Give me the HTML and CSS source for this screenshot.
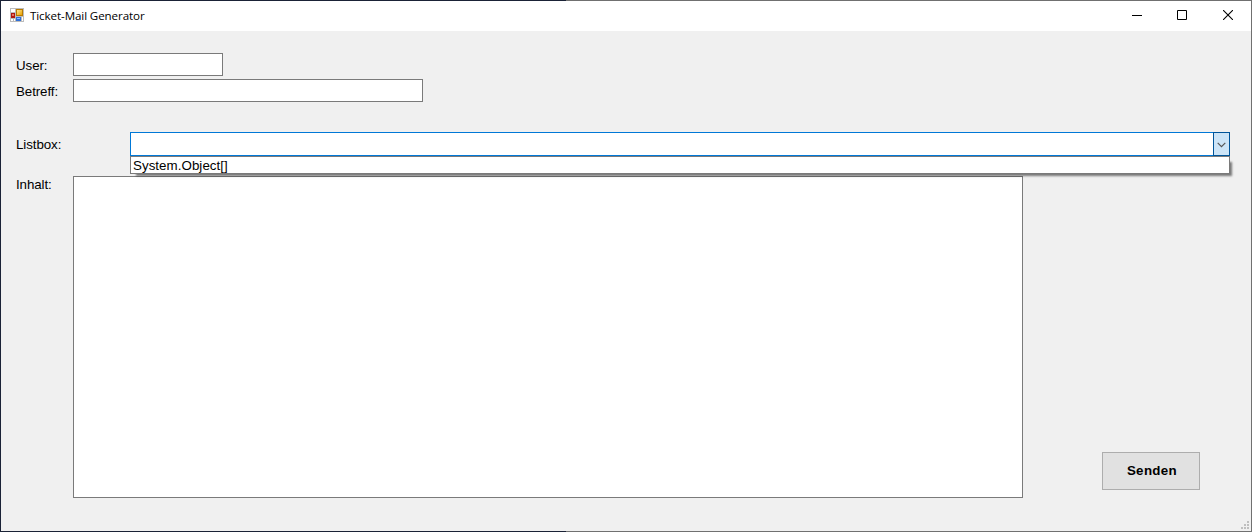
FILE: index.html
```html
<!DOCTYPE html>
<html lang="de">
<head>
  <meta charset="UTF-8">
  <title>Ticket-Mail Generator</title>
  <link rel="stylesheet" href="styles.css">
</head>
<body>

<div class="window">
  <div class="titlebar">
    <svg class="app-icon" width="14" height="14" viewBox="0 0 14 14" shape-rendering="crispEdges">
      <defs>
        <linearGradient id="gold" x1="0" y1="0" x2="1" y2="1">
          <stop offset="0" stop-color="#ffe790"/>
          <stop offset="1" stop-color="#e8a000"/>
        </linearGradient>
      </defs>
      <rect width="14" height="14" fill="#bcbcbc"/>
      <rect x="1" y="1" width="4" height="3" fill="#fff"/>
      <rect x="1" y="5" width="4" height="5" fill="#b01810"/>
      <rect x="2" y="6" width="2" height="2" fill="#e87060"/>
      <rect x="6" y="1" width="7" height="7" fill="#b87a00"/>
      <rect x="7" y="2" width="5" height="5" fill="url(#gold)"/>
      <rect x="6" y="9" width="5" height="4" fill="#2f6fd8"/>
      <rect x="7" y="10" width="3" height="1" fill="#8fbcff"/>
      <rect x="1" y="11" width="2" height="2" fill="#fff"/>
      <rect x="4" y="11" width="1" height="2" fill="#fff"/>
      <rect x="12" y="9" width="1" height="4" fill="#fff"/>
    </svg>
    <span class="title">Ticket-Mail Generator</span>
    <div class="controls">
      <svg width="10" height="10" viewBox="0 0 10 10" shape-rendering="crispEdges"><path d="M0 5h10v1H0z"/></svg>
      <svg width="10" height="10" viewBox="0 0 10 10"><path d="M.5.5h9v9h-9z" fill="none" stroke="#000"/></svg>
      <svg width="10" height="10" viewBox="0 0 10 10"><path d="M0 0l10 10M10 0L0 10" fill="none" stroke="#000" stroke-width="1.1"/></svg>
    </div>
  </div>

  <div class="form">
    <div class="row user">
      <label for="user">User:</label>
      <input class="field short" type="text" id="user">
    </div>
    <div class="row subject">
      <label for="subject">Betreff:</label>
      <input class="field long" type="text" id="subject">
    </div>
    <div class="row list">
      <label>Listbox:</label>
      <div class="combo">
        <div class="combo-btn">
          <svg width="9" height="6" viewBox="0 0 9 6"><path d="M.7.8l3.8 3.8L8.3.8" fill="none" stroke="#555" stroke-width="1.2"/></svg>
        </div>
        <div class="dropdown">System.Object[]</div>
      </div>
    </div>
    <div class="row content">
      <label for="content">Inhalt:</label>
      <textarea class="field area" id="content"></textarea>
      <button class="send" type="button">Senden</button>
    </div>
  </div>

  <svg class="grip" width="8" height="8" viewBox="0 0 8 8" shape-rendering="crispEdges">
    <path fill="#bfbfbf" d="M6 0h2v2H6zM3 3h2v2H3zM6 3h2v2H6zM0 6h2v2H0zM3 6h2v2H3zM6 6h2v2H6z"/>
  </svg>
</div>

</body>
</html>
```
FILE: styles.css
```css
* {
  box-sizing: border-box;
}
body {
  margin: 0;
  padding: 1px;
  width: 1252px;
  height: 532px;
  overflow: hidden;
  /* left part of the frame lies over a dark background */
  background: linear-gradient(to right, #1a2236 566px, #707070 566px);
  font-family: "Liberation Sans", Arial, sans-serif;
  font-size: 13.33px;
  color: #000;
}
.window {
  position: relative;
  height: 530px;
  background: #f0f0f0;
}
.titlebar {
  display: flex;
  align-items: center;
  height: 30px;
  padding-left: 9px;
  background: #fff;
}
.app-icon {
  margin-top: -2px;
}
.title {
  margin-left: 6px;
  padding-bottom: 2px;
  font-family: "Open Sans", "Noto Sans", sans-serif;
  font-size: 11.6px;
  letter-spacing: -0.1px;
}
.controls {
  display: flex;
  margin-left: auto;
  gap: 36px;
  padding: 0 18px 2px 0;
}
.controls svg:first-child {
  margin-right: -1px;
}
.form {
  padding: 22px 0 0 15px;
}
.row {
  display: flex;
  align-items: flex-start;
}
label {
  width: 57px;
  padding-top: 5px;
  line-height: 16px;
  letter-spacing: -0.08px;
}
.field {
  display: block;
  margin: 0;
  padding: 2px;
  border: 1px solid #7a7a7a;
  border-radius: 0;
  background: #fff;
  outline: none;
  resize: none;
}
.short {
  width: 150px;
  height: 23px;
}
.long {
  width: 350px;
  height: 23px;
}
.subject {
  margin-top: 3px;
}
.list {
  margin-top: 30px;
}
.list label {
  width: 114px;
}
.combo {
  position: relative;
  display: flex;
  justify-content: flex-end;
  width: 1100px;
  height: 24px;
  border: 1px solid #0078d7;
  background: #fff;
}
.combo-btn {
  display: flex;
  align-items: center;
  justify-content: center;
  width: 17px;
  margin: -1px;
  border: 1px solid #005499;
  background: #cce4f7;
}
.combo-btn svg {
  margin-top: 2px;
}
.dropdown {
  position: absolute;
  z-index: 1;
  top: 23px;
  left: -1px;
  width: 1100px;
  height: 18px;
  padding-left: 2px;
  border: 1px solid #7a7a7a;
  background: #fff;
  box-shadow: 4px 4px 2px -2px rgba(0, 0, 0, 0.5);
  line-height: 17px;
  letter-spacing: 0.05px;
}
.content {
  margin-top: 20px;
}
.content label {
  padding-top: 1px;
}
.area {
  width: 950px;
  height: 322px;
}
.send {
  align-self: flex-end;
  width: 98px;
  height: 38px;
  margin: 0 0 8px 79px;
  padding: 0 0 1px 2px;
  border: 1px solid #adadad;
  background: #e1e1e1;
  color: #000;
  font-family: inherit;
  font-size: 13.33px;
  font-weight: bold;
  letter-spacing: 0.35px;
}
.grip {
  position: absolute;
  right: 2px;
  bottom: 2px;
}
```
